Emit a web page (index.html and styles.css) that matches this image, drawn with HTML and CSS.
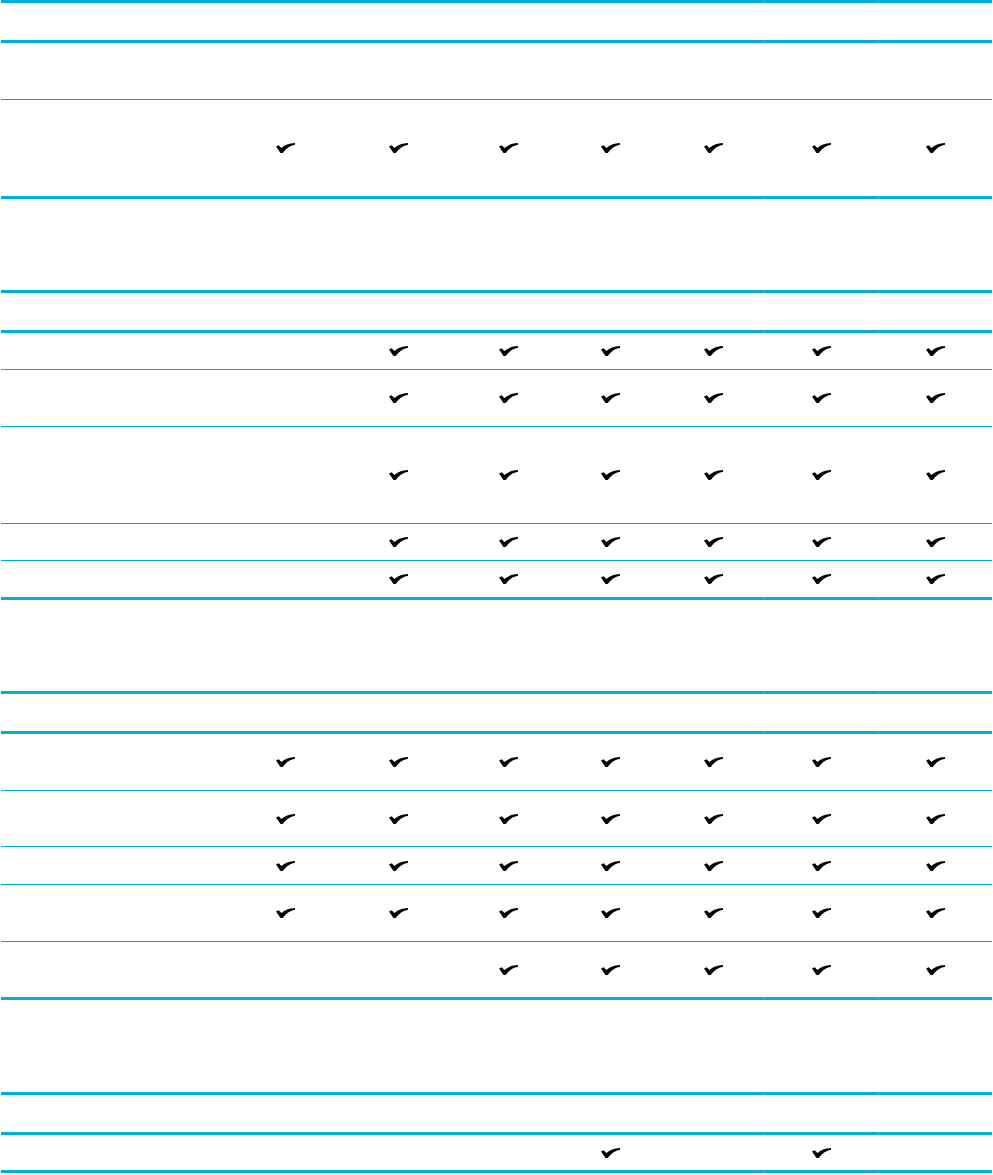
FILE: index.html
```html
<!DOCTYPE html>
<html lang="en">
<head>
<meta charset="utf-8">
<title>Feature table</title>
<link rel="stylesheet" href="styles.css">
</head>
<body>
<svg class="defs" width="0" height="0" aria-hidden="true">
  <symbol id="chk" viewBox="0 0 19 10">
    <path d="M0 3.5 L2.7 2.3 L5.4 5.0 C8.8 2.2 12.8 0.4 19 0 L19 1.7 C14 2.5 9.9 5.4 6.7 10 L4.5 10 Z"/>
  </symbol>
</svg>
<main class="page">
  <section class="tbl">
    <div class="row head"><div class="c"></div><div class="c"></div><div class="c"></div><div class="c"></div><div class="c"></div><div class="c"></div><div class="c sep"></div><div class="c sep"></div></div>
    <div class="row h56"><div class="c"></div><div class="c"></div><div class="c"></div><div class="c"></div><div class="c"></div><div class="c"></div><div class="c sep"></div><div class="c sep"></div></div>
    <div class="row h96 last"><div class="c"></div><div class="c"><svg class="ck"><use href="#chk"/></svg></div><div class="c"><svg class="ck"><use href="#chk"/></svg></div><div class="c"><svg class="ck"><use href="#chk"/></svg></div><div class="c"><svg class="ck"><use href="#chk"/></svg></div><div class="c"><svg class="ck"><use href="#chk"/></svg></div><div class="c sep"><svg class="ck"><use href="#chk"/></svg></div><div class="c sep"><svg class="ck"><use href="#chk"/></svg></div></div>
  </section>

  <section class="tbl">
    <div class="row head"><div class="c"></div><div class="c"></div><div class="c"></div><div class="c"></div><div class="c"></div><div class="c"></div><div class="c sep"></div><div class="c sep"></div></div>
    <div class="row h36"><div class="c"></div><div class="c"></div><div class="c"><svg class="ck"><use href="#chk"/></svg></div><div class="c"><svg class="ck"><use href="#chk"/></svg></div><div class="c"><svg class="ck"><use href="#chk"/></svg></div><div class="c"><svg class="ck"><use href="#chk"/></svg></div><div class="c sep"><svg class="ck"><use href="#chk"/></svg></div><div class="c sep"><svg class="ck"><use href="#chk"/></svg></div></div>
    <div class="row h56"><div class="c"></div><div class="c"></div><div class="c"><svg class="ck"><use href="#chk"/></svg></div><div class="c"><svg class="ck"><use href="#chk"/></svg></div><div class="c"><svg class="ck"><use href="#chk"/></svg></div><div class="c"><svg class="ck"><use href="#chk"/></svg></div><div class="c sep"><svg class="ck"><use href="#chk"/></svg></div><div class="c sep"><svg class="ck"><use href="#chk"/></svg></div></div>
    <div class="row h96"><div class="c"></div><div class="c"></div><div class="c"><svg class="ck"><use href="#chk"/></svg></div><div class="c"><svg class="ck"><use href="#chk"/></svg></div><div class="c"><svg class="ck"><use href="#chk"/></svg></div><div class="c"><svg class="ck"><use href="#chk"/></svg></div><div class="c sep"><svg class="ck"><use href="#chk"/></svg></div><div class="c sep"><svg class="ck"><use href="#chk"/></svg></div></div>
    <div class="row h36"><div class="c"></div><div class="c"></div><div class="c"><svg class="ck"><use href="#chk"/></svg></div><div class="c"><svg class="ck"><use href="#chk"/></svg></div><div class="c"><svg class="ck"><use href="#chk"/></svg></div><div class="c"><svg class="ck"><use href="#chk"/></svg></div><div class="c sep"><svg class="ck"><use href="#chk"/></svg></div><div class="c sep"><svg class="ck"><use href="#chk"/></svg></div></div>
    <div class="row h36 last"><div class="c"></div><div class="c"></div><div class="c"><svg class="ck"><use href="#chk"/></svg></div><div class="c"><svg class="ck"><use href="#chk"/></svg></div><div class="c"><svg class="ck"><use href="#chk"/></svg></div><div class="c"><svg class="ck"><use href="#chk"/></svg></div><div class="c sep"><svg class="ck"><use href="#chk"/></svg></div><div class="c sep"><svg class="ck"><use href="#chk"/></svg></div></div>
  </section>

  <section class="tbl">
    <div class="row head"><div class="c"></div><div class="c"></div><div class="c"></div><div class="c"></div><div class="c"></div><div class="c"></div><div class="c sep"></div><div class="c sep"></div></div>
    <div class="row h56"><div class="c"></div><div class="c"><svg class="ck"><use href="#chk"/></svg></div><div class="c"><svg class="ck"><use href="#chk"/></svg></div><div class="c"><svg class="ck"><use href="#chk"/></svg></div><div class="c"><svg class="ck"><use href="#chk"/></svg></div><div class="c"><svg class="ck"><use href="#chk"/></svg></div><div class="c sep"><svg class="ck"><use href="#chk"/></svg></div><div class="c sep"><svg class="ck"><use href="#chk"/></svg></div></div>
    <div class="row h55"><div class="c"></div><div class="c"><svg class="ck"><use href="#chk"/></svg></div><div class="c"><svg class="ck"><use href="#chk"/></svg></div><div class="c"><svg class="ck"><use href="#chk"/></svg></div><div class="c"><svg class="ck"><use href="#chk"/></svg></div><div class="c"><svg class="ck"><use href="#chk"/></svg></div><div class="c sep"><svg class="ck"><use href="#chk"/></svg></div><div class="c sep"><svg class="ck"><use href="#chk"/></svg></div></div>
    <div class="row h37"><div class="c"></div><div class="c"><svg class="ck"><use href="#chk"/></svg></div><div class="c"><svg class="ck"><use href="#chk"/></svg></div><div class="c"><svg class="ck"><use href="#chk"/></svg></div><div class="c"><svg class="ck"><use href="#chk"/></svg></div><div class="c"><svg class="ck"><use href="#chk"/></svg></div><div class="c sep"><svg class="ck"><use href="#chk"/></svg></div><div class="c sep"><svg class="ck"><use href="#chk"/></svg></div></div>
    <div class="row h56"><div class="c"></div><div class="c"><svg class="ck"><use href="#chk"/></svg></div><div class="c"><svg class="ck"><use href="#chk"/></svg></div><div class="c"><svg class="ck"><use href="#chk"/></svg></div><div class="c"><svg class="ck"><use href="#chk"/></svg></div><div class="c"><svg class="ck"><use href="#chk"/></svg></div><div class="c sep"><svg class="ck"><use href="#chk"/></svg></div><div class="c sep"><svg class="ck"><use href="#chk"/></svg></div></div>
    <div class="row h55 last"><div class="c"></div><div class="c"></div><div class="c"></div><div class="c"><svg class="ck"><use href="#chk"/></svg></div><div class="c"><svg class="ck"><use href="#chk"/></svg></div><div class="c"><svg class="ck"><use href="#chk"/></svg></div><div class="c sep"><svg class="ck"><use href="#chk"/></svg></div><div class="c sep"><svg class="ck"><use href="#chk"/></svg></div></div>
  </section>

  <section class="tbl t4">
    <div class="row head"><div class="c"></div><div class="c"></div><div class="c"></div><div class="c"></div><div class="c"></div><div class="c"></div><div class="c sep"></div><div class="c sep"></div></div>
    <div class="row h35 last"><div class="c"></div><div class="c"></div><div class="c"></div><div class="c"></div><div class="c"><svg class="ck"><use href="#chk"/></svg></div><div class="c"></div><div class="c sep"><svg class="ck"><use href="#chk"/></svg></div><div class="c sep"></div></div>
  </section>
</main>
</body>
</html>
```

FILE: styles.css
```css
html, body {
  margin: 0;
  padding: 0;
  background: #ffffff;
}

body {
  font-family: "Liberation Sans", Arial, sans-serif;
  color: #000;
}

.defs {
  position: absolute;
  width: 0;
  height: 0;
  overflow: hidden;
}

.page {
  width: 991px;
  padding-left: 1px;
  display: flex;
  flex-direction: column;
  gap: 91px;
}

.tbl {
  display: flex;
  flex-direction: column;
}

.tbl.t4 {
  margin-top: 1px;
}

.row {
  display: grid;
  grid-template-columns: 231px 106px 120px 100px 104px 102px 114px 114px;
  border-bottom: 1px solid #00a9d4;
}

.row.head {
  border-top: 3px solid #00afd8;
  border-bottom: 3px solid #00afd8;
  height: 37px;
  box-sizing: content-box;
}

.row.last {
  border-bottom: 3px solid #00afd8;
}

.h35 { height: 35px; }
.h36 { height: 36px; }
.h37 { height: 37px; }
.h55 { height: 55px; }
.h56 { height: 56px; }
.h96 { height: 96px; }

.c {
  position: relative;
  display: flex;
  align-items: center;
  justify-content: center;
}

/* faint cell seams visible on the heavy rules */
.head .sep::before,
.head .sep::after,
.last .sep::after {
  content: "";
  position: absolute;
  left: 0;
  width: 1px;
  height: 3px;
  background: #45bfe0;
}

.head .sep::before { top: -3px; }
.head .sep::after,
.last .sep::after { bottom: -3px; }

.ck {
  width: 19px;
  height: 10px;
  fill: #000;
  margin-left: 1px;
}
```
